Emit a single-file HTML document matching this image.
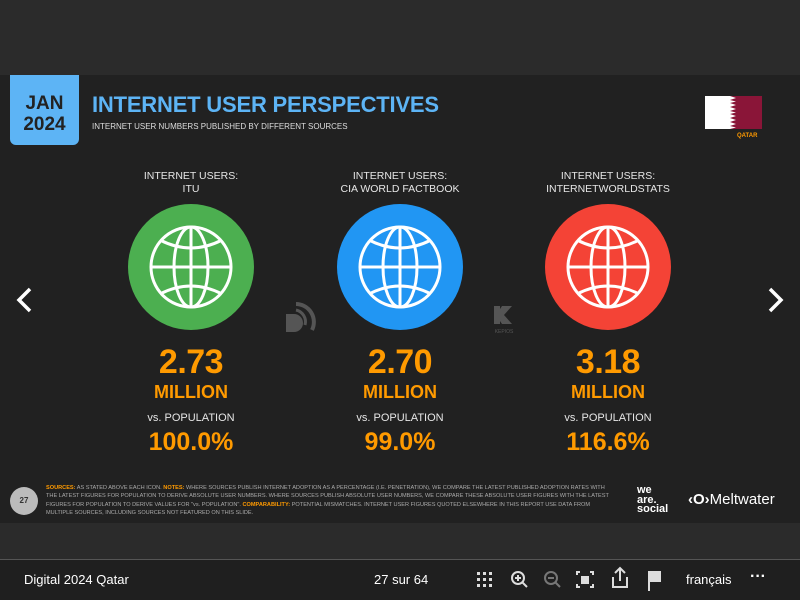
<!DOCTYPE html>
<html><head><meta charset="utf-8"><style>
*{margin:0;padding:0;box-sizing:border-box}
body{width:800px;height:600px;background:#2b2b2b;font-family:"Liberation Sans",sans-serif;position:relative;overflow:hidden;color:#fff}
.abs{position:absolute}
.slide{left:0;top:75px;width:800px;height:448px;background:#212121}
.c{text-align:center;width:200px}
.lab{font-size:10.5px;line-height:13px;color:#e6e6e6}
.num{font-size:34px;font-weight:bold;color:#ff9a00;line-height:34px;letter-spacing:-0.5px}
.mil{font-size:18px;font-weight:bold;color:#ff9a00}
.vs{font-size:11px;color:#e6e6e6}
.pct{font-size:25px;font-weight:bold;color:#ff9a00}
.circ{width:126px;height:126px;border-radius:50%}
</style></head><body>
<div class="abs slide"></div>
<div class="abs" style="left:10px;top:75px;width:69px;height:70px;background:#5db4f5;border-radius:0 0 6px 6px;color:#222;font-weight:bold;font-size:19px;line-height:21px;text-align:center;padding-top:18px">JAN<br>2024</div>
<div class="abs" style="left:92px;top:92px;font-size:22px;font-weight:bold;color:#5db4f5;letter-spacing:-0.2px">INTERNET USER PERSPECTIVES</div>
<div class="abs" style="left:92px;top:122px;font-size:8px;color:#ddd">INTERNET USER NUMBERS PUBLISHED BY DIFFERENT SOURCES</div>
<svg class="abs" style="left:705px;top:96px" width="57" height="33"><rect width="57" height="33" fill="#8a1538"/><polygon points="0,0 25,0 31,2 25,4 31,5.5 25,7 31,9 25,11 31,13 25,15 31,16.5 25,18 31,20 25,22 31,24 25,26 31,28 25,30 31,31.5 25,33 0,33" fill="#fff"/></svg>
<div class="abs" style="left:737px;top:133px;font-size:6px;font-weight:bold;color:#ff9a00">QATAR</div>

<div class="abs c lab" style="left:91px;top:170px">INTERNET USERS:<br>ITU</div>
<div class="abs c lab" style="left:300px;top:170px">INTERNET USERS:<br>CIA WORLD FACTBOOK</div>
<div class="abs c lab" style="left:508px;top:170px">INTERNET USERS:<br>INTERNETWORLDSTATS</div>

<div class="abs circ" style="left:128px;top:204px;background:#4caf50"></div>
<div class="abs circ" style="left:337px;top:204px;background:#2196f3"></div>
<div class="abs circ" style="left:545px;top:204px;background:#f44336"></div>
<svg class="abs" style="left:0;top:0" width="800" height="600">
<g id="g" fill="none" stroke="#fff" stroke-width="3">
<circle cx="191" cy="267" r="40"/><ellipse cx="191" cy="267" rx="17" ry="40"/><line x1="191" y1="227" x2="191" y2="307"/><line x1="151" y1="267" x2="231" y2="267"/><path d="M160 240 Q191 256 222 240 M160 294 Q191 278 222 294"/>
</g>
<use href="#g" x="209"/><use href="#g" x="417"/>
<g fill="#555"><path d="M286 314h8a9 9 0 0 1 0 18h-8z"/><path d="M296 304a18 18 0 0 1 16 26" stroke="#555" stroke-width="4" fill="none"/><path d="M296 310a12 12 0 0 1 9 15" stroke="#555" stroke-width="3" fill="none"/></g>
<g fill="#555"><path d="M494 306h6v18h-6zM502 306h10l-8 9 8 9h-10l-6-9z"/></g>
<text x="504" y="333" font-size="5" fill="#555" text-anchor="middle" font-family="Liberation Sans">KEPIOS</text>
<path d="M30 289l-11 11 11 11" stroke="#fff" stroke-width="3.5" fill="none"/>
<path d="M770 289l11 11-11 11" stroke="#fff" stroke-width="3.5" fill="none"/>
</svg>

<div class="abs c num" style="left:91px;top:345px">2.73</div>
<div class="abs c num" style="left:300px;top:345px">2.70</div>
<div class="abs c num" style="left:508px;top:345px">3.18</div>
<div class="abs c mil" style="left:91px;top:382px">MILLION</div>
<div class="abs c mil" style="left:300px;top:382px">MILLION</div>
<div class="abs c mil" style="left:508px;top:382px">MILLION</div>
<div class="abs c vs" style="left:91px;top:412px">vs. POPULATION</div>
<div class="abs c vs" style="left:300px;top:412px">vs. POPULATION</div>
<div class="abs c vs" style="left:508px;top:412px">vs. POPULATION</div>
<div class="abs c pct" style="left:91px;top:428px">100.0%</div>
<div class="abs c pct" style="left:300px;top:428px">99.0%</div>
<div class="abs c pct" style="left:508px;top:428px">116.6%</div>

<div class="abs" style="left:10px;top:487px;width:28px;height:28px;border-radius:50%;background:#bbb;color:#333;font-size:8px;font-weight:bold;text-align:center;line-height:28px">27</div>
<div class="abs" style="left:46px;top:484px;width:566px;font-size:5.6px;line-height:8.3px;color:#aaa"><b style="color:#ff9a00">SOURCES:</b> AS STATED ABOVE EACH ICON. <b style="color:#ff9a00">NOTES:</b> WHERE SOURCES PUBLISH INTERNET ADOPTION AS A PERCENTAGE (I.E. PENETRATION), WE COMPARE THE LATEST PUBLISHED ADOPTION RATES WITH THE LATEST FIGURES FOR POPULATION TO DERIVE ABSOLUTE USER NUMBERS. WHERE SOURCES PUBLISH ABSOLUTE USER NUMBERS, WE COMPARE THESE ABSOLUTE USER FIGURES WITH THE LATEST FIGURES FOR POPULATION TO DERIVE VALUES FOR "vs. POPULATION". <b style="color:#ff9a00">COMPARABILITY:</b> POTENTIAL MISMATCHES. INTERNET USER FIGURES QUOTED ELSEWHERE IN THIS REPORT USE DATA FROM MULTIPLE SOURCES, INCLUDING SOURCES NOT FEATURED ON THIS SLIDE.</div>
<div class="abs" style="left:637px;top:486px;font-size:11px;font-weight:bold;line-height:9.5px;color:#fff">we<br>are.<br>social</div>
<div class="abs" style="left:688px;top:491px;font-size:15px;color:#fff"><b>‹O›</b>Meltwater</div>

<div class="abs" style="left:0;top:559px;width:800px;height:1px;background:#555"></div>
<div class="abs" style="left:0;top:560px;width:800px;height:40px;background:#1f1f1f"></div>
<div class="abs" style="left:24px;top:572px;font-size:13px">Digital 2024 Qatar</div>
<div class="abs" style="left:374px;top:572px;font-size:13px">27 sur 64</div>
<div class="abs" style="left:686px;top:572px;font-size:13px">français</div>
<div class="abs" style="left:750px;top:568px;font-size:16px;font-weight:bold">···</div>
<svg class="abs" style="left:470px;top:565px" width="200" height="30" fill="none" stroke="#ddd" stroke-width="2">
<g fill="#ddd" stroke="none"><rect x="7" y="7" width="3" height="3"/><rect x="13" y="7" width="3" height="3"/><rect x="19" y="7" width="3" height="3"/><rect x="7" y="13" width="3" height="3"/><rect x="13" y="13" width="3" height="3"/><rect x="19" y="13" width="3" height="3"/><rect x="7" y="19" width="3" height="3"/><rect x="13" y="19" width="3" height="3"/><rect x="19" y="19" width="3" height="3"/></g>
<circle cx="48" cy="13" r="6"/><path d="M52 17l5 5M45 13h6M48 10v6"/>
<g stroke="#777"><circle cx="81" cy="13" r="6"/><path d="M85 17l5 5M78 13h6"/></g>
<path d="M110 7h-3v3M120 7h3v3M110 22h-3v-3M120 22h3v-3"/><rect x="111" y="11" width="8" height="8" fill="#ddd" stroke="none"/>
<path d="M145 8l5-5 5 5M150 4v12M143 12v10h14v-10"/>
<path d="M179 6v20"/><path d="M181 7h9v9h-9z" fill="#ddd"/>
</svg>
</body></html>
